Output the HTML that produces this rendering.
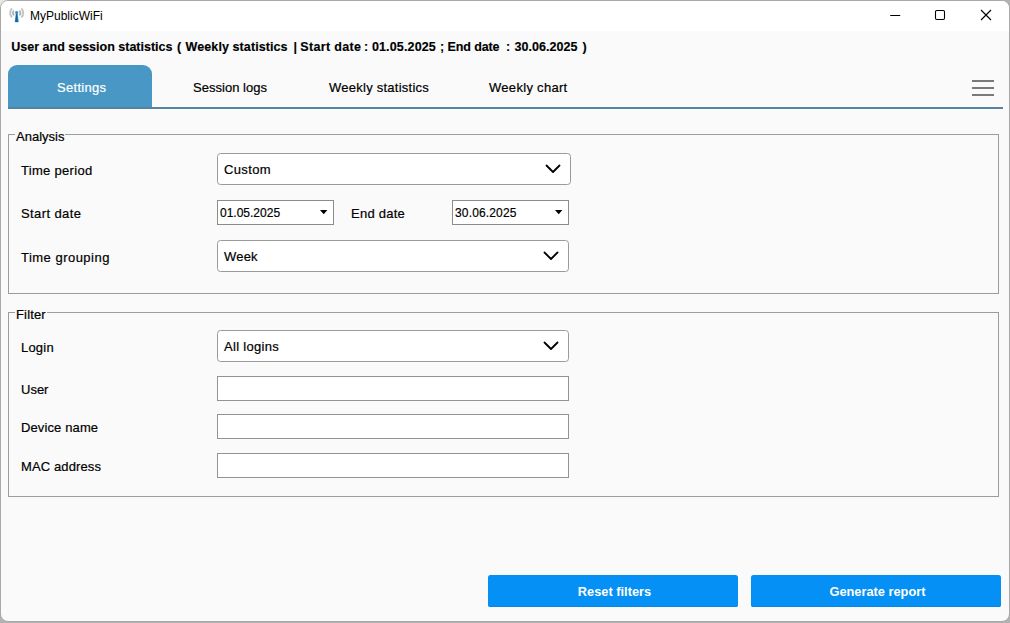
<!DOCTYPE html>
<html>
<head>
<meta charset="utf-8">
<style>
*{box-sizing:border-box;margin:0;padding:0}
html,body{width:1010px;height:623px;overflow:hidden;background:#b2b2b2;font-family:"Liberation Sans",sans-serif;color:#000}
#win{position:absolute;left:0;top:0;width:1010px;height:622px;border:1px solid #a9a9a9;border-radius:8px;background:#fafafa;overflow:hidden}
#titlebar{position:absolute;left:0;top:0;width:1008px;height:30px;background:#fff}
.abs{position:absolute;white-space:nowrap}
#title{left:29px;top:8px;font-size:12px;line-height:14px;color:#000}
.hd{top:39px;font-size:12.5px;line-height:15px;font-weight:bold;-webkit-text-stroke:0.15px #000}
#tabline{position:absolute;left:7px;top:106px;width:995px;height:2px;background:#56839f;z-index:2}
#tab1{position:absolute;left:7px;top:64px;width:144px;height:44px;background:#4897c4;border-radius:9px 9px 0 0}
.tab{font-size:13px;line-height:16px;-webkit-text-stroke:0.2px currentColor}
.lbl{font-size:13px;line-height:16px;-webkit-text-stroke:0.2px currentColor}
.group{position:absolute;border:1px solid #9c9c9c}
.gl{position:absolute;background:#fafafa;font-size:13px;line-height:16px;padding:0 1px;-webkit-text-stroke:0.2px currentColor}
.combo{position:absolute;background:#fff;border:1px solid #9a9a9a;border-radius:3.5px}
.combo span{position:absolute;left:6px;top:8px;font-size:13px;line-height:16px;-webkit-text-stroke:0.2px currentColor}
.combo svg{position:absolute}
.date{position:absolute;background:#fff;border:1px solid #8c8c8c}
.date span{position:absolute;left:2px;top:5px;font-size:12px;line-height:15px;-webkit-text-stroke:0.18px currentColor}
.date svg{position:absolute;right:5px;top:9px}
.inp{position:absolute;background:#fff;border:1px solid #939393}
.btn{position:absolute;background:#0490f4;border-radius:2.5px;box-shadow:inset 0 -1px 0 #0a86e2;color:#fff;font-weight:bold;font-size:12.8px;line-height:34px;text-align:center;padding-left:3px}
</style>
</head>
<body>
<div style="position:absolute;left:0;top:0;width:8px;height:8px;background:#e8e6e5"></div>
<div id="win">
  <div id="titlebar"></div>
  <!-- app icon -->
  <svg class="abs" style="left:-1px;top:-1px" width="30" height="30" viewBox="0 0 30 30">
    <path d="M12.02 8.4 A6.5 6.5 0 0 0 12.02 17.4" fill="none" stroke="#c4c4c4" stroke-width="2"/>
    <path d="M13.99 10.46 A3.65 3.65 0 0 0 13.99 15.34" fill="none" stroke="#b2b2b2" stroke-width="1.7"/>
    <path d="M21.38 8.4 A6.5 6.5 0 0 1 21.38 17.4" fill="none" stroke="#c4c4c4" stroke-width="2"/>
    <path d="M19.41 10.46 A3.65 3.65 0 0 1 19.41 15.34" fill="none" stroke="#b2b2b2" stroke-width="1.7"/>
    <path d="M15.85 13.4 L17.55 13.4 L18.8 21.9 Q16.75 22.6 14.7 21.9 Z" fill="#2a90cd"/>
    <path d="M16.1 13.6 L17.1 13.6 L17.6 22.1 L15.6 22.1 Z" fill="#13639c"/>
    <circle cx="16.7" cy="12.5" r="1.55" fill="#2a8fcc"/>
  </svg>
  <div id="title" class="abs">MyPublicWiFi</div>
  <!-- window controls -->
  <svg class="abs" style="left:887px;top:7px" width="110" height="16" viewBox="0 0 110 16">
    <path d="M2.2 7.5 H12.2" stroke="#000" stroke-width="1.1" fill="none"/>
    <rect x="47.5" y="2.5" width="9" height="9" rx="1.2" fill="none" stroke="#000" stroke-width="1.1"/>
    <path d="M93 2 L103 12 M103 2 L93 12" stroke="#000" stroke-width="1.15" fill="none"/>
  </svg>

  <div class="abs hd" style="left:10.3px;letter-spacing:0px">User and session statistics</div>
  <div class="abs hd" style="left:176px;letter-spacing:0px">(</div>
  <div class="abs hd" style="left:184.6px;letter-spacing:0.09px">Weekly statistics</div>
  <div class="abs hd" style="left:292.6px;letter-spacing:0px">|</div>
  <div class="abs hd" style="left:299.3px;letter-spacing:0.33px">Start date</div>
  <div class="abs hd" style="left:363px;letter-spacing:0px">:</div>
  <div class="abs hd" style="left:370.9px;letter-spacing:0.15px">01.05.2025</div>
  <div class="abs hd" style="left:439px;letter-spacing:0px">;</div>
  <div class="abs hd" style="left:446.6px;letter-spacing:-0.12px">End date</div>
  <div class="abs hd" style="left:505px;letter-spacing:0px">:</div>
  <div class="abs hd" style="left:513.6px;letter-spacing:0.04px">30.06.2025</div>
  <div class="abs hd" style="left:581.5px;letter-spacing:0px">)</div>

  <div id="tabline"></div>
  <div id="tab1"></div>
  <div class="abs tab" style="left:56px;top:79px;color:#fff;letter-spacing:0.3px">Settings</div>
  <div class="abs tab" style="left:192px;top:79px;letter-spacing:0.03px">Session logs</div>
  <div class="abs tab" style="left:328px;top:79px;letter-spacing:0.25px">Weekly statistics</div>
  <div class="abs tab" style="left:488px;top:79px;letter-spacing:0.3px">Weekly chart</div>
  <!-- hamburger -->
  <div class="abs" style="left:971px;top:79px;width:22px;height:2px;background:#7a7a7a"></div>
  <div class="abs" style="left:971px;top:86px;width:22px;height:2px;background:#7a7a7a"></div>
  <div class="abs" style="left:971px;top:93px;width:22px;height:2px;background:#7a7a7a"></div>

  <!-- Analysis group -->
  <div class="group" style="left:7px;top:133px;width:991px;height:160px"></div>
  <div class="gl" style="left:14px;top:128px">Analysis</div>
  <div class="abs lbl" style="left:20px;top:162px;letter-spacing:0.3px">Time period</div>
  <div class="abs lbl" style="left:20px;top:205px;letter-spacing:0.4px">Start date</div>
  <div class="abs lbl" style="left:20px;top:249px;letter-spacing:0.48px">Time grouping</div>
  <div class="abs lbl" style="left:350px;top:205px;letter-spacing:0.25px">End date</div>

  <div class="combo" style="left:216px;top:152px;width:354px;height:32px"><span style="letter-spacing:0.35px">Custom</span>
    <svg style="left:327px;top:10px" width="16" height="10" viewBox="0 0 16 10"><path d="M1.5 1.5 L8 8 L14.5 1.5" fill="none" stroke="#000" stroke-width="1.8" stroke-linecap="round" stroke-linejoin="round"/></svg>
  </div>
  <div class="date" style="left:216px;top:199px;width:117px;height:25px"><span>01.05.2025</span><svg width="8" height="5" viewBox="0 0 8 5"><path d="M0 0 H7.4 L3.7 4.2 Z" fill="#000"/></svg></div>
  <div class="date" style="left:451px;top:199px;width:117px;height:25px"><span style="letter-spacing:0.15px">30.06.2025</span><svg width="8" height="5" viewBox="0 0 8 5"><path d="M0 0 H7.4 L3.7 4.2 Z" fill="#000"/></svg></div>
  <div class="combo" style="left:216px;top:239px;width:352px;height:32px"><span style="letter-spacing:0.2px">Week</span>
    <svg style="left:325px;top:10px" width="16" height="10" viewBox="0 0 16 10"><path d="M1.5 1.5 L8 8 L14.5 1.5" fill="none" stroke="#000" stroke-width="1.8" stroke-linecap="round" stroke-linejoin="round"/></svg>
  </div>

  <!-- Filter group -->
  <div class="group" style="left:7px;top:311px;width:991px;height:185px"></div>
  <div class="gl" style="left:14px;top:306px;letter-spacing:0.15px">Filter</div>
  <div class="abs lbl" style="left:20px;top:339px;letter-spacing:0.2px">Login</div>
  <div class="abs lbl" style="left:20px;top:381px;letter-spacing:0px">User</div>
  <div class="abs lbl" style="left:20px;top:419px;letter-spacing:0.12px">Device name</div>
  <div class="abs lbl" style="left:20px;top:458px;letter-spacing:0.12px">MAC address</div>

  <div class="combo" style="left:216px;top:329px;width:352px;height:32px"><span style="letter-spacing:0.3px">All logins</span>
    <svg style="left:325px;top:10px" width="16" height="10" viewBox="0 0 16 10"><path d="M1.5 1.5 L8 8 L14.5 1.5" fill="none" stroke="#000" stroke-width="1.8" stroke-linecap="round" stroke-linejoin="round"/></svg>
  </div>
  <div class="inp" style="left:216px;top:375px;width:352px;height:25px"></div>
  <div class="inp" style="left:216px;top:413px;width:352px;height:25px"></div>
  <div class="inp" style="left:216px;top:452px;width:352px;height:25px"></div>

  <div class="btn" style="left:487px;top:574px;width:250px;height:32px">Reset filters</div>
  <div class="btn" style="left:750px;top:574px;width:250px;height:32px">Generate report</div>
</div>
</body>
</html>
